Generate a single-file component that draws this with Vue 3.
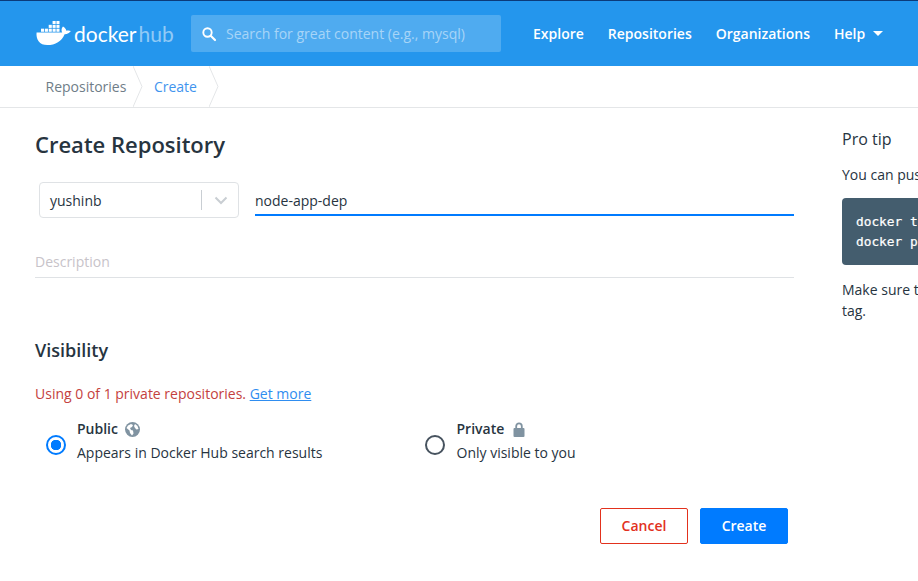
<template>
  <div class="page">
    <header class="top">
      <div class="logo">
        <svg class="whale" width="37" height="27" viewBox="0 0 38 28" aria-hidden="true">
          <g fill="#fff">
            <rect x="5" y="9" width="3.2" height="3.2"/><rect x="9" y="9" width="3.2" height="3.2"/><rect x="13" y="9" width="3.2" height="3.2"/><rect x="17" y="9" width="3.2" height="3.2"/><rect x="21" y="9" width="3.2" height="3.2"/>
            <rect x="13" y="5" width="3.2" height="3.2"/><rect x="17" y="5" width="3.2" height="3.2"/><rect x="21" y="5" width="3.2" height="3.2"/>
            <rect x="17" y="1" width="3.2" height="3.2"/><rect x="21" y="1" width="3.2" height="3.2"/>
            <path d="M36 11.5c-1.3-.8-3.3-.9-4.7-.3-.3-1.700-1.300-2.900-2.700-3.900l-.8-.6-.6.8c-1.100 1.600-1.200 3.900-.2 5.500H.4C.1 16 .6 19.500 2.500 22c2 2.700 5 4 9 4 8.500 0 15-4 18-11.300 2.700.1 5-1 6.500-3.200z"/>
          </g>
        </svg>
        <span class="wm">docker</span><span class="wm hub">hub</span>
      </div>
      <div class="search">
        <svg width="16" height="16" viewBox="0 0 16 16" aria-hidden="true"><circle cx="6.500" cy="6.500" r="4.200" fill="none" stroke="#fff" stroke-width="1.900"/><path d="M9.700 9.700l4.300 4.300" stroke="#fff" stroke-width="2.200" stroke-linecap="round"/></svg>
        <span>Search for great content (e.g., mysql)</span>
      </div>
      <nav class="nav">
        <a>Explore</a><a>Repositories</a><a>Organizations</a>
        <a class="help">Help<i class="caret"></i></a>
      </nav>
    </header>

    <div class="crumbs">
      <span class="crumb">Repositories</span>
      <svg class="chev first" width="10" height="41" viewBox="0 0 10 41" aria-hidden="true"><path d="M0 0l9 20.500L0 41" fill="none" stroke="#e4e6e8"/></svg>
      <span class="crumb active">Create</span>
      <svg class="chev" width="10" height="41" viewBox="0 0 10 41" aria-hidden="true"><path d="M0 0l9 20.500L0 41" fill="none" stroke="#e4e6e8"/></svg>
    </div>

    <div class="body">
      <main class="main">
        <h1>Create Repository</h1>
        <div class="name-row">
          <div class="select">
            <span class="value">yushinb</span>
            <i class="sep"></i>
            <svg width="14" height="9" viewBox="0 0 14 9" aria-hidden="true"><path d="M1.500 1.500L7 7l5.500-5.500" fill="none" stroke="#c9ced3" stroke-width="2"/></svg>
          </div>
          <div class="name">node-app-dep</div>
        </div>
        <div class="desc">Description</div>

        <h2>Visibility</h2>
        <p class="usage">Using 0 of 1 private repositories. <a>Get more</a></p>

        <div class="options">
          <div class="option pub">
            <span class="radio on"></span>
            <div>
              <div class="opt-title">Public
                <svg width="15" height="15" viewBox="0 0 15 15" aria-hidden="true"><circle cx="7.500" cy="7.500" r="7.500" fill="#8093a1"/><path d="M3 3.500l3-1.500 2 1-1 2-2 1 1 2 2 .5.500 3-1.500 2-2-2.500-.5-2.500L1.500 6zM10 2l2.500 2 1 3-2 .5-1.500-1.500-1-2z" fill="#fff"/></svg>
              </div>
              <div class="opt-sub">Appears in Docker Hub search results</div>
            </div>
          </div>
          <div class="option priv">
            <span class="radio"></span>
            <div>
              <div class="opt-title">Private
                <svg class="lock" width="12" height="15" viewBox="0 0 12 15" aria-hidden="true"><rect x="0.500" y="6" width="11" height="9" rx="1" fill="#8093a1"/><path d="M3.200 6.500V4.200a2.800 2.800 0 0 1 5.600 0v2.300" fill="none" stroke="#8093a1" stroke-width="1.800"/></svg>
              </div>
              <div class="opt-sub">Only visible to you</div>
            </div>
          </div>
        </div>

        <div class="actions">
          <button class="btn cancel">Cancel</button>
          <button class="btn create">Create</button>
        </div>
      </main>

      <aside class="side">
        <h3>Pro tip</h3>
        <p>You can push a new image to this repository using the CLI</p>
        <pre class="code">docker tag local-image:tagname new-repo:tagname
docker push new-repo:tagname</pre>
        <p>Make sure to change tagname with your desired image repository<br>tag.</p>
      </aside>
    </div>
  </div>
</template>

<script setup>
</script>

<style>
html, body { margin: 0; overflow: hidden; background: #fff; }
</style>

<style scoped>
.page {
  width: 918px;
  height: 581px;
  overflow: hidden;
  font-family: "Open Sans", sans-serif;
  font-size: 14px;
  color: #27343f;
  background: #fff;
}
.top {
  height: 65px;
  border-top: 1px solid #0b3a7a;
  background: #2496ed;
  display: flex;
  align-items: center;
  box-sizing: content-box;
}
.logo {
  margin-left: 36px;
  width: 155px;
  display: flex;
  align-items: center;
  color: #fff;
}
.whale { margin-right: 1px; margin-top: -1px; }
.wm {
  font-family: Lato, sans-serif;
  font-size: 21px;
  font-weight: 400;
  letter-spacing: 0;
  line-height: 28px;
}
.hub { color: rgba(255,255,255,.5); margin-left: 2px; }
.search {
  width: 310px;
  height: 37px;
  border-radius: 2px;
  background: rgba(255,255,255,.2);
  display: flex;
  align-items: center;
  gap: 9px;
  padding-left: 10px;
  box-sizing: border-box;
  color: rgba(255,255,255,.5);
}
.nav {
  margin-left: 32px;
  display: flex;
  gap: 24px;
  color: #fff;
  font-weight: 600;
}
.help { display: flex; align-items: center; }
.caret {
  margin-left: 8px;
  border-left: 5px solid transparent;
  border-right: 5px solid transparent;
  border-top: 5px solid #fff;
}
.crumbs {
  height: 41px;
  border-bottom: 1px solid #e4e6e8;
  display: flex;
  align-items: center;
  padding-left: 45.5px;
}
.crumb { color: #6f7d88; }
.crumb.active { color: #3f94ee; margin-left: 11px; }
.chev { margin-left: 12px; }
.chev.first { margin-left: 6.5px; }
.body { display: flex; }
.main { width: 759px; margin-left: 35px; flex: none; }
h1 {
  margin: 20px 0 0;
  font-size: 22px;
  line-height: 32px;
  font-weight: 585;
  color: #27343f;
}
.name-row { display: flex; margin-top: 22px; margin-left: 4px; gap: 16px; }
.select {
  width: 200px;
  height: 36px;
  box-sizing: border-box;
  border: 1px solid #dfe2e5;
  border-radius: 4px;
  display: flex;
  align-items: center;
  padding: 0 10px;
}
.value { flex: 1; }
.sep { width: 1px; height: 20px; background: #c9ced3; margin-right: 12px; }
.name {
  flex: 1;
  height: 32px;
  line-height: 38px;
  border-bottom: 2px solid #007bff;
}
.desc {
  margin-top: 32px;
  height: 27px;
  line-height: 24px;
  color: #c7c3c9;
  border-bottom: 1px solid #dfe2e5;
}
h2 {
  margin: 59px 0 0;
  font-size: 18px;
  line-height: 26px;
  font-weight: 585;
}
.usage { margin: 21px 0 0; line-height: 20px; color: #c4413e; }
.usage a { color: #2f8df0; text-decoration: underline; }
.options { display: flex; margin-top: 13px; }
.option { display: flex; align-items: center; gap: 11px; width: 380px; padding-left: 11px; box-sizing: border-box; }
.option.priv { gap: 12px; padding-left: 10px; }
.radio {
  width: 20px;
  height: 20px;
  flex: none;
  box-sizing: border-box;
  border: 2px solid #47535f;
  border-radius: 50%;
  margin-top: 8px;
}
.radio.on { border-color: #007bff; background: radial-gradient(circle, #007bff 0 5px, #fff 5.500px); }
.opt-title { font-weight: 600; line-height: 24px; display: flex; align-items: center; gap: 7px; }
.lock { margin-left: 2px; }
.opt-sub { line-height: 24px; }
.actions { display: flex; justify-content: flex-end; gap: 12px; margin-top: 43px; padding-right: 6px; }
.btn {
  height: 36px;
  width: 88px;
  box-sizing: border-box;
  border-radius: 2px;
  font-family: inherit;
  font-size: 14px;
  font-weight: 600;
  padding: 0 0 1px;
}
.cancel { background: #fff; border: 1px solid #e2311d; color: #e2311d; }
.create { background: #007bff; border: 1px solid #007bff; color: #fff; }
.side { margin-left: 48px; width: 460px; flex: none; }
h3 { margin: 20px 0 0; font-size: 16px; line-height: 22px; font-weight: 400; }
.side p { margin: 14px 0 0; line-height: 21px; white-space: nowrap; }
.side .code {
  margin: 13px 0 0;
  padding: 14px;
  height: 67px;
  box-sizing: border-box;
  background: #445d6e;
  border-radius: 4px;
  color: #fff;
  font-family: "DejaVu Sans Mono", monospace;
  font-size: 12.8px;
  line-height: 20px;
  -webkit-text-stroke: 0.2px #fff;
}
</style>
